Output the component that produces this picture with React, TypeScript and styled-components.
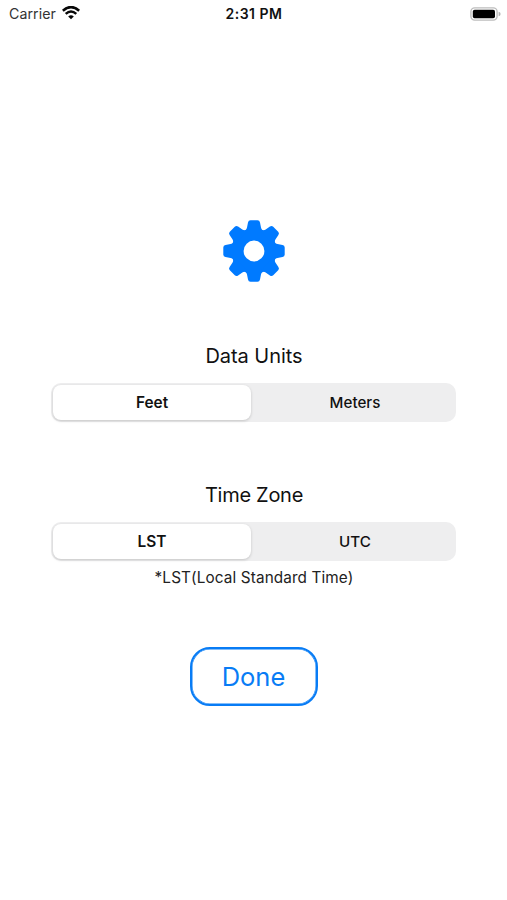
import React, { useState } from 'react';
import styled, { createGlobalStyle } from 'styled-components';

const GlobalStyle = createGlobalStyle`
  * { box-sizing: border-box; }
  body { margin: 0; background: #fff; }
  button { font: inherit; color: inherit; background: none; border: 0; padding: 0; margin: 0; }
`;

const Screen = styled.main`
  width: 507px;
  height: 900px;
  overflow: hidden;
  background: #fff;
  color: #111;
  font-family: Inter, 'Liberation Sans', sans-serif;
  display: flex;
  flex-direction: column;
`;

const StatusBar = styled.header`
  height: 28px;
  padding: 0 6px 0 9px;
  display: grid;
  grid-template-columns: 1fr auto 1fr;
  align-items: center;
`;

const Network = styled.div`
  display: flex;
  align-items: center;
  gap: 6px;
  padding-bottom: 2px;
  color: #333;
  font-size: 14.2px;
  letter-spacing: 0.05px;
`;

const Clock = styled.time`
  padding: 0 2px 2px 0;
  font-size: 14px;
  font-weight: 600;
  letter-spacing: 0.48px;
`;

const BatterySlot = styled.div`
  display: flex;
  justify-content: flex-end;
  padding-bottom: 1px;
`;

const Settings = styled.section`
  width: 405px;
  margin: 192px 0 0 51px;
  display: flex;
  flex-direction: column;
  align-items: center;
`;

const Heading = styled.h2<{ $top: number; $spacing: number }>`
  margin: ${(p) => p.$top}px 0 0;
  height: 28px;
  line-height: 28px;
  padding-left: 1px;
  font-size: 20px;
  font-weight: 400;
  letter-spacing: ${(p) => p.$spacing}px;
`;

const SegmentTrack = styled.div`
  width: 405px;
  height: 39px;
  margin-top: 13px;
  padding: 2px;
  display: grid;
  grid-template-columns: 198px 1fr;
  gap: 5px;
  border-radius: 10px;
  background: #eeeeef;
`;

const Segment = styled.button<{ $selected: boolean }>`
  border-radius: 8px;
  font-size: ${(p) => (p.$selected ? 15.4 : 15.2)}px;
  font-weight: ${(p) => (p.$selected ? 600 : 500)};
  background: ${(p) => (p.$selected ? '#fff' : 'transparent')};
  box-shadow: ${(p) => (p.$selected ? '0 1px 3px rgba(0, 0, 0, 0.18)' : 'none')};
`;

const Note = styled.p`
  margin: 7px 0 0;
  height: 20px;
  line-height: 20px;
  padding-left: 1px;
  font-size: 15.3px;
  letter-spacing: 0.12px;
  color: #222;
`;

const DoneButton = styled.button`
  && {
    width: 128px;
    height: 59px;
    margin-top: 59px;
    padding-bottom: 1px;
    border: 2px solid #087cf5;
    box-shadow: inset 0 0 0 0.5px #087cf5;
    border-radius: 20px;
    color: #087cf5;
    font-size: 25.5px;
  }
`;

const TEETH = [0, 45, 90, 135, 180, 225, 270, 315];

function Gear() {
  return (
    <svg width="62" height="62" viewBox="-31 -31 62 62" fill="#007aff" aria-hidden="true">
      <circle r="16.2" fill="none" stroke="#007aff" strokeWidth="11.6" />
      {TEETH.map((angle) => (
        <path
          key={angle}
          transform={`rotate(${angle})`}
          d="M-10-18.5V-20.2C-8-21-7.3-22-7-23.5L-6-28.5Q-5.6-30.7-3.5-30.7H3.5Q5.6-30.7 6-28.5L7-23.5C7.3-22 8-21 10-20.2V-18.5Z"
        />
      ))}
    </svg>
  );
}

function Wifi() {
  return (
    <svg width="18" height="14" viewBox="0 0 18 14" fill="none" stroke="#080808" aria-hidden="true">
      <path d="M.8 4.7Q9-2.5 17.2 4.7" strokeWidth="2.6" />
      <path d="M3.7 7.9Q9 3.2 14.3 7.9" strokeWidth="2.5" />
      <path d="M9 13.2 6.2 10.4Q9 8.2 11.8 10.4Z" fill="#080808" stroke="none" />
    </svg>
  );
}

function Battery() {
  return (
    <svg width="31" height="14" viewBox="0 0 31 14" aria-hidden="true">
      <rect x="0.9" y="0.9" width="26.2" height="12.2" rx="3.8" fill="#fff" stroke="#bdbdbd" strokeWidth="1.4" />
      <rect x="2.8" y="2.8" width="22.2" height="8.5" rx="1.8" fill="#000" />
      <path d="M28.6 4.8Q30.6 5.3 30.6 7T28.6 9.2Z" fill="#b5b5b5" />
    </svg>
  );
}

function SegmentedControl({ options, label }: { options: string[]; label: string }) {
  const [selected, setSelected] = useState(options[0]);
  return (
    <SegmentTrack role="group" aria-label={label}>
      {options.map((option) => (
        <Segment
          key={option}
          $selected={option === selected}
          aria-pressed={option === selected}
          onClick={() => setSelected(option)}
        >
          {option}
        </Segment>
      ))}
    </SegmentTrack>
  );
}

export default function App() {
  return (
    <>
      <GlobalStyle />
      <Screen>
        <StatusBar>
          <Network>Carrier <Wifi /></Network>
          <Clock>2:31 PM</Clock>
          <BatterySlot><Battery /></BatterySlot>
        </StatusBar>
        <Settings>
          <Gear />
          <Heading $top={60} $spacing={-0.05}>Data Units</Heading>
          <SegmentedControl label="Data Units" options={['Feet', 'Meters']} />
          <Heading $top={59} $spacing={-0.28}>Time Zone</Heading>
          <SegmentedControl label="Time Zone" options={['LST', 'UTC']} />
          <Note>*LST(Local Standard Time)</Note>
          <DoneButton>Done</DoneButton>
        </Settings>
      </Screen>
    </>
  );
}
